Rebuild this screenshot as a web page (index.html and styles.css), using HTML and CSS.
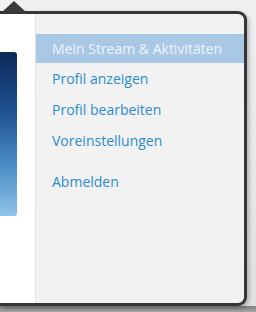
FILE: index.html
```html
<!DOCTYPE html>
<html lang="de">
<head>
  <meta charset="UTF-8">
  <title>Benutzermenü</title>
  <link rel="stylesheet" href="styles.css">
</head>
<body>

<div class="popup">
  <div class="arrow"></div>
  <div class="side">
    <div class="cover"></div>
  </div>
  <ul class="menu">
    <li class="active"><a href="#">Mein Stream &amp; Aktivitäten</a></li>
    <li><a href="#">Profil anzeigen</a></li>
    <li><a href="#">Profil bearbeiten</a></li>
    <li><a href="#">Voreinstellungen</a></li>
    <li class="sep"><a href="#">Abmelden</a></li>
  </ul>
</div>

<div class="floor"></div>

</body>
</html>
```

FILE: styles.css
```css
body {
  margin: 0;
  padding-top: 11px;
  width: 256px;
  height: 301px;
  overflow: hidden;
  font-family: "Open Sans", Arial, sans-serif;
  background: linear-gradient(to bottom, #eef0f2, #dfe1e3);
}

.popup {
  position: relative;
  display: flex;
  width: 244px;
  height: 289px;
  border: 3px solid #363636;
  border-left: none;
  border-radius: 0 9px 9px 0;
  background: #f2f2f2;
  box-shadow: 2px 2px 4px rgba(0,0,0,0.25);
}

.arrow {
  position: absolute;
  left: 2px;
  top: -13px;
  width: 24px;
  height: 11px;
  background: #3a3a3a;
  clip-path: polygon(50% 0, 100% 100%, 0 100%);
}

.side {
  width: 35px;
  background: #fff;
  border-right: 1px solid #e3e3e3;
}

.cover {
  width: 17px;
  height: 164px;
  margin-top: 38px;
  border-radius: 0 3px 3px 0;
  background: linear-gradient(to bottom, #0e2a5a, #1d4f8f 35%, #4b8fc8 70%, #8fc4e8);
}

.menu {
  flex: 1;
  list-style: none;
  margin: 0;
  padding: 20px 0 0;
}

.menu li {
  height: 31px;
  line-height: 31px;
  padding-left: 16px;
  font-size: 14px;
}

.menu a {
  color: #2a8cd2;
  text-decoration: none;
}

.menu li.active {
  height: 29px;
  line-height: 30px;
  background: #a8c8e6;
}

.menu li.active a {
  color: #eef4fa;
}

.menu li.sep {
  margin-top: 10px;
}

.floor {
  height: 10px;
  background: linear-gradient(to bottom, #7d7d7d, #c4c4c4);
}
```
